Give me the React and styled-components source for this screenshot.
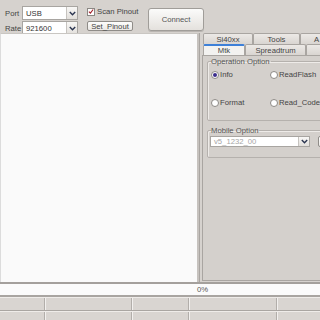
import React from "react";
import styled, { createGlobalStyle } from "styled-components";

const GlobalStyle = createGlobalStyle`
  html, body { margin: 0; padding: 0; background: #d6d2ce; }
  body {
    font-family: "Liberation Sans", Arial, sans-serif;
    font-size: 7.7px;
    color: #3c3c3c;
  }
  #root { width: 320px; height: 320px; }
`;

const Window = styled.div`
  width: 320px;
  height: 320px;
  overflow: hidden;
  display: flex;
  flex-direction: column;
  background: #d6d2ce;
`;

const TopBar = styled.div`
  height: 33px;
  flex-shrink: 0;
  box-sizing: border-box;
  display: flex;
  align-items: flex-start;
  padding: 6px 0 0 5px;
`;

const PortGrid = styled.div`
  display: grid;
  grid-template-columns: 17px 56px;
  grid-auto-rows: 14px;
  row-gap: 1px;
  align-items: center;
`;

const Label = styled.span`
  color: #444;
`;

const Combo = styled.div`
  height: ${(p) => p.$h || 14}px;
  width: ${(p) => p.$w || 56}px;
  box-sizing: border-box;
  display: flex;
  align-items: stretch;
  flex-shrink: 0;
  background: #fff;
  border: 1px solid #a8a5a1;
  color: ${(p) => (p.$muted ? "#a6a6a6" : "#333")};
`;

const ComboText = styled.span`
  flex: 1;
  padding-left: 3px;
  display: flex;
  align-items: center;
`;

const ComboArrow = styled.span`
  width: 10px;
  display: flex;
  align-items: center;
  justify-content: center;
  background: linear-gradient(#f8f7f5, #e2dfdb);
  border-left: 1px solid #c6c3bf;
`;

const PinoutCol = styled.div`
  width: 46px;
  margin-left: 9px;
  padding-top: 1px;
  display: flex;
  flex-direction: column;
  gap: 5px;
`;

const CheckRow = styled.label`
  display: flex;
  align-items: center;
  gap: 2px;
  height: 9px;
  color: #444;
  white-space: nowrap;
`;

const CheckBox = styled.span`
  width: 8px;
  height: 8px;
  flex-shrink: 0;
  box-sizing: border-box;
  border: 1px solid #8b8884;
  background: #fff;
  display: flex;
  align-items: center;
  justify-content: center;
`;

const SmallButton = styled.div`
  width: ${(p) => p.$w}px;
  height: ${(p) => p.$h}px;
  margin-left: ${(p) => p.$gap || 0}px;
  box-sizing: border-box;
  flex-shrink: 0;
  display: flex;
  align-items: center;
  justify-content: center;
  border: 1px solid #8f8c88;
  border-radius: 2px;
  background: linear-gradient(#fdfdfc, #ebe8e5);
  color: #444;
`;

const ConnectButton = styled.div`
  margin: 2px 0 0 15px;
  width: 56px;
  height: 23px;
  box-sizing: border-box;
  display: flex;
  align-items: center;
  justify-content: center;
  border: 1px solid #a09d99;
  border-radius: 3px;
  background: linear-gradient(#fbfbfa, #e4e1dd);
  box-shadow: 0 1px 0 #b9b5b1;
  color: #555;
`;

const Main = styled.div`
  height: 251px;
  flex-shrink: 0;
  box-sizing: border-box;
  display: flex;
  border-bottom: 2px solid #a4a09c;
`;

const LogPanel = styled.div`
  width: 199px;
  flex-shrink: 0;
  box-sizing: border-box;
  background: #fafafa;
  border-left: 1px solid #dcdcdc;
  border-top: 1px solid #c9c6c2;
  border-right: 2px solid #c6c2be;
`;

const RightPanel = styled.div`
  width: 160px;
  flex-shrink: 0;
  box-sizing: border-box;
  display: flex;
  flex-direction: column;
  border-left: 1px solid #a9a5a1;
  padding: 0 0 1px 2px;
`;

const TabRow = styled.div`
  display: flex;
  height: 11px;
  padding-left: ${(p) => p.$indent || 1}px;
`;

const Tab = styled.div`
  width: ${(p) => p.$w}px;
  flex-shrink: 0;
  box-sizing: border-box;
  display: flex;
  align-items: center;
  justify-content: ${(p) => (p.$left ? "flex-start" : "center")};
  padding-left: ${(p) => p.$left || 0}px;
  border: 1px solid #a9a5a1;
  border-bottom: none;
  border-radius: 2px 2px 0 0;
  border-top: ${(p) => (p.$active ? "2px solid #3d80d8" : "1px solid #a9a5a1")};
  background: ${(p) =>
    p.$active ? "#f3f2f0" : "linear-gradient(#ece9e6, #d9d5d1)"};
  color: #444;
`;

const TabBody = styled.div`
  flex: 1;
  box-sizing: border-box;
  border: 1px solid #a9a5a1;
  background: #d4d0cc;
  padding: 1px 0 0 4px;
`;

const Group = styled.fieldset`
  margin: ${(p) => p.$top || 0}px 0 0 0;
  width: 140px;
  min-width: 0;
  box-sizing: border-box;
  height: ${(p) => p.$h}px;
  border: 1px solid #b5b1ad;
  border-radius: 2px;
  box-shadow: inset 1px 1px 0 #eeebe8;
  padding: ${(p) => p.$pad};
`;

const Legend = styled.legend`
  padding: 0 1px 0 0;
  margin-left: ${(p) => p.$shift || 0}px;
  line-height: 9px;
  color: #555;
`;

const RadioGrid = styled.div`
  display: grid;
  grid-template-columns: 59px auto;
  grid-auto-rows: 9px;
  row-gap: 19px;
  padding-top: 4px;
`;

const RadioItem = styled.label`
  display: flex;
  align-items: center;
  gap: 1px;
  color: #444;
  white-space: nowrap;
`;

const Radio = styled.span`
  width: 8px;
  height: 8px;
  flex-shrink: 0;
  box-sizing: border-box;
  border-radius: 50%;
  border: 1px solid #8d8a86;
  background: #fff;
  display: flex;
  align-items: center;
  justify-content: center;
  &::after {
    content: "";
    width: 4px;
    height: 4px;
    border-radius: 50%;
    background: ${(p) => (p.$on ? "#3b2d8c" : "transparent")};
  }
`;

const MobileRow = styled.div`
  display: flex;
  align-items: center;
  padding-top: 1px;
`;

const Progress = styled.div`
  height: 13px;
  flex-shrink: 0;
  box-sizing: border-box;
  background: #fbfbfb;
  border-bottom: 2px solid #a9a5a1;
  padding-left: 197px;
  line-height: 11px;
  color: #555;
`;

const StatusRow = styled.div`
  height: ${(p) => p.$h}px;
  flex-shrink: 0;
  box-sizing: border-box;
  display: flex;
  border-top: 1px solid #efece9;
  border-bottom: 1px solid #aaa6a2;
  background: #d9d5d1;
`;

const StatusCell = styled.div`
  width: ${(p) => p.$w}px;
  flex-shrink: 0;
  box-sizing: border-box;
  border-right: 1px solid #b2aeaa;
  box-shadow: 1px 0 0 #f2f0ee;
`;

const Chevron = () => (
  <svg width="7" height="5" viewBox="0 0 7 5">
    <path d="M0.8 1 L3.5 3.8 L6.2 1" fill="none" stroke="#2b3550" strokeWidth="1.4" />
  </svg>
);

const Check = () => (
  <svg width="7" height="7" viewBox="0 0 7 7">
    <path d="M1 3.6 L2.8 5.4 L6 1.2" fill="none" stroke="#a3202a" strokeWidth="1.3" />
  </svg>
);

const statusCells = [45, 87, 57, 88, 60];

export default function App() {
  return (
    <>
      <GlobalStyle />
      <Window>
        <TopBar>
          <PortGrid>
            <Label>Port</Label>
            <Combo>
              <ComboText>USB</ComboText>
              <ComboArrow>
                <Chevron />
              </ComboArrow>
            </Combo>
            <Label>Rate</Label>
            <Combo>
              <ComboText>921600</ComboText>
              <ComboArrow>
                <Chevron />
              </ComboArrow>
            </Combo>
          </PortGrid>
          <PinoutCol>
            <CheckRow>
              <CheckBox>
                <Check />
              </CheckBox>
              Scan Pinout
            </CheckRow>
            <SmallButton $w={46} $h={10}>Set_Pinout</SmallButton>
          </PinoutCol>
          <ConnectButton>Connect</ConnectButton>
        </TopBar>

        <Main>
          <LogPanel />
          <RightPanel>
            <TabRow>
              <Tab $w={50}>Si40xx</Tab>
              <Tab $w={47}>Tools</Tab>
              <Tab $w={40} $left={13}>A</Tab>
            </TabRow>
            <TabRow>
              <Tab $w={42} $active>Mtk</Tab>
              <Tab $w={61}>Spreadtrum</Tab>
              <Tab $w={40} />
            </TabRow>
            <TabBody>
              <Group $h={64} $pad="0 0 0 3px">
                <Legend>Operation Option</Legend>
                <RadioGrid>
                  <RadioItem>
                    <Radio $on />
                    Info
                  </RadioItem>
                  <RadioItem>
                    <Radio />
                    ReadFlash
                  </RadioItem>
                  <RadioItem>
                    <Radio />
                    Format
                  </RadioItem>
                  <RadioItem>
                    <Radio />
                    Read_Code
                  </RadioItem>
                </RadioGrid>
              </Group>
              <Group $top={5} $h={32} $pad="0 0 0 2px">
                <Legend $shift={1}>Mobile Option</Legend>
                <MobileRow>
                  <Combo $w={100} $h={11} $muted>
                    <ComboText>v5_1232_00</ComboText>
                    <ComboArrow>
                      <Chevron />
                    </ComboArrow>
                  </Combo>
                  <SmallButton $w={20} $h={11} $gap={8} />
                </MobileRow>
              </Group>
            </TabBody>
          </RightPanel>
        </Main>

        <Progress>0%</Progress>
        <StatusRow $h={14}>
          {statusCells.map((w, i) => (
            <StatusCell key={i} $w={w} />
          ))}
        </StatusRow>
        <StatusRow $h={10}>
          {statusCells.map((w, i) => (
            <StatusCell key={i} $w={w} />
          ))}
        </StatusRow>
      </Window>
    </>
  );
}
